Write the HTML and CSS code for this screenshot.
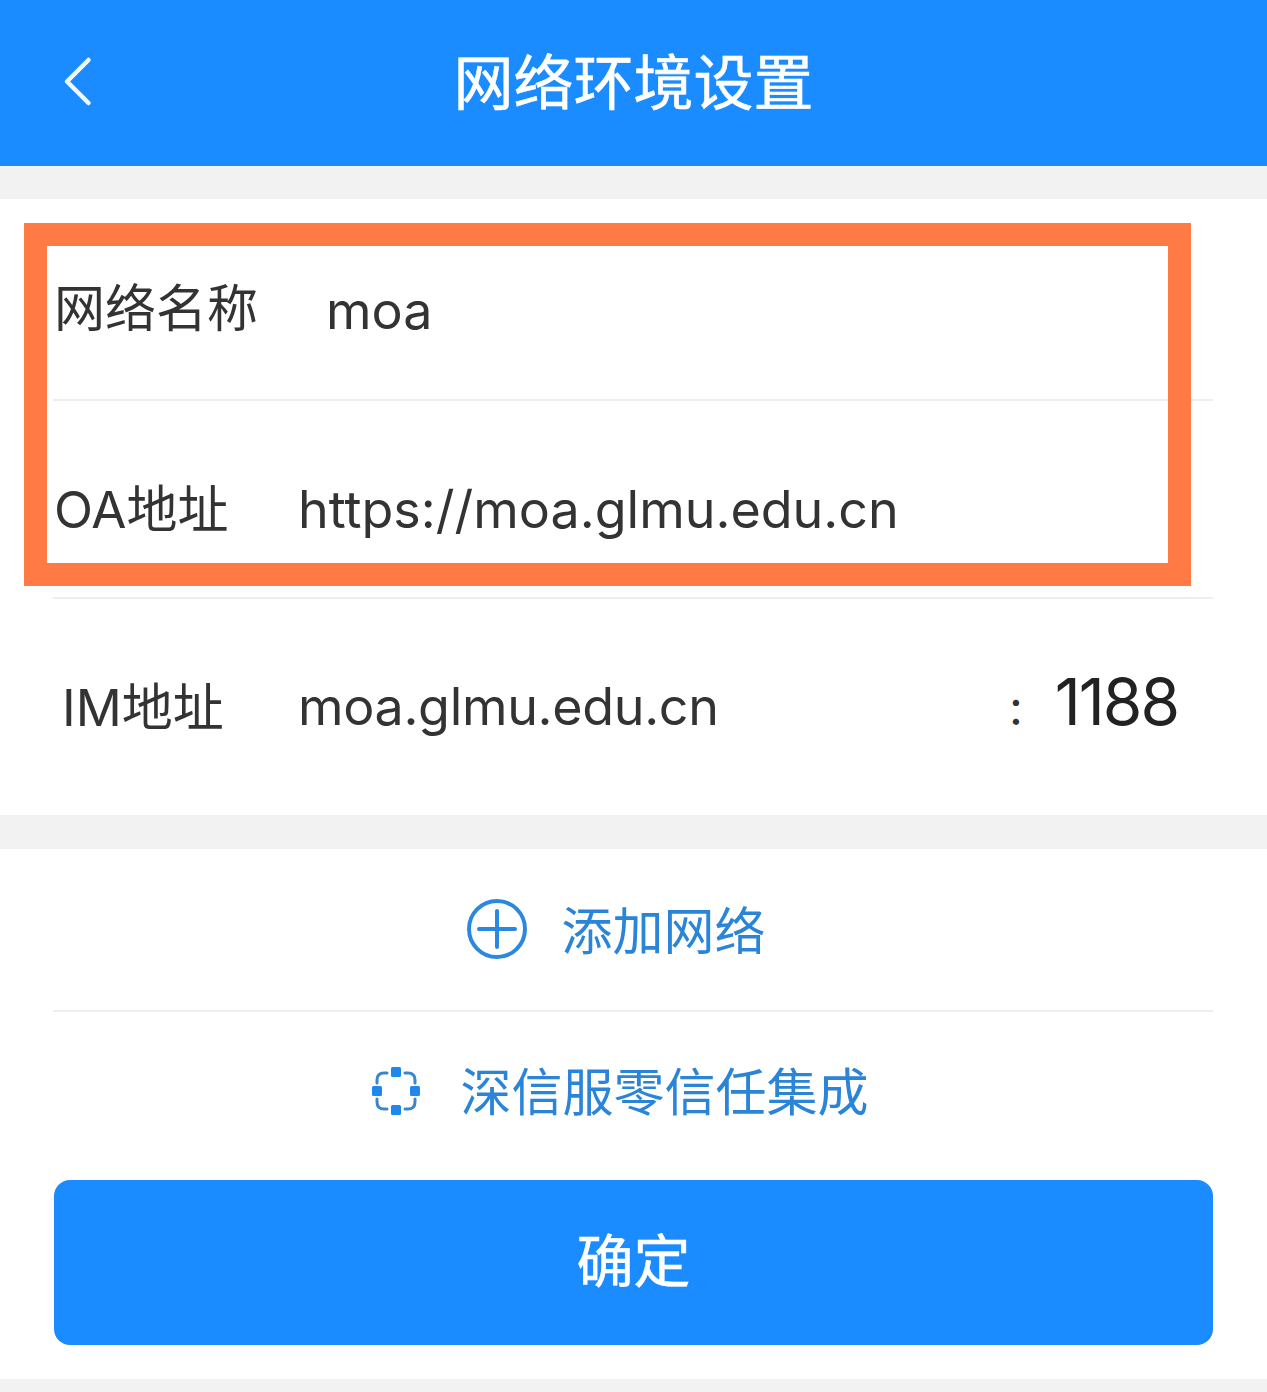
FILE: index.html
```html
<!DOCTYPE html>
<html lang="zh-CN">
<head>
    <meta charset="UTF-8">
    <meta name="viewport" content="width=device-width, initial-scale=1.0">
    <title>网络环境设置</title>
    <link rel="stylesheet" href="styles.css">
</head>
<body>
    <header class="topbar">
        <svg class="back" width="40" height="56" viewBox="0 0 40 56">
            <path d="M29.5 7 L8 28.5 L29.5 50" fill="none" stroke="#f2f8ff" stroke-width="4.5" stroke-linecap="round" stroke-linejoin="round"/>
        </svg>
        <h1 class="title">网络环境设置</h1>
    </header>

    <section class="form">
        <div class="row row-name">
            <span class="label">网络名称</span>
            <span class="value value-name">moa</span>
        </div>
        <div class="row row-oa">
            <span class="label">OA地址</span>
            <span class="value value-oa">https://moa.glmu.edu.cn</span>
        </div>
        <div class="row row-im">
            <span class="label label-im">IM地址</span>
            <span class="value value-im">moa.glmu.edu.cn</span>
            <span class="colon">:</span>
            <span class="port">1188</span>
        </div>
        <div class="highlight"></div>
    </section>

    <section class="actions">
        <div class="action action-add">
            <svg class="icon-add" width="60" height="60" viewBox="0 0 60 60">
                <circle cx="30" cy="30" r="28" fill="none" stroke="#2a88e0" stroke-width="4"/>
                <path d="M12 30 H48 M30 12 V48" fill="none" stroke="#2a88e0" stroke-width="4" stroke-linecap="round"/>
            </svg>
            <span class="action-text">添加网络</span>
        </div>
        <div class="action action-trust">
            <svg class="icon-trust" width="48" height="48" viewBox="0 0 48 48">
                <path d="M15 6 H12 Q5 6 5 13 V16 M33 6 H36 Q43 6 43 13 V16 M5 32 V35 Q5 42 12 42 H15 M43 32 V35 Q43 42 36 42 H33" fill="none" stroke="#3f86c9" stroke-width="3" stroke-linecap="round"/>
                <rect x="19" y="0" width="10" height="10" rx="1.5" fill="#1e88ee"/>
                <rect x="0" y="19" width="10" height="10" rx="1.5" fill="#1e88ee"/>
                <rect x="38" y="19" width="10" height="10" rx="1.5" fill="#1e88ee"/>
                <rect x="19" y="38" width="10" height="10" rx="1.5" fill="#1e88ee"/>
            </svg>
            <span>深信服零信任集成</span>
        </div>
        <button class="confirm">确定</button>
    </section>
</body>
</html>
```

FILE: styles.css
```css
body {
    margin: 0;
    background: #f2f2f2;
    font-family: Inter, "Noto Sans CJK SC", sans-serif;
    color: #333;
}
.topbar {
    height: 166px;
    box-sizing: border-box;
    padding-bottom: 10px;
    background: #1a8cff;
    display: flex;
    align-items: center;
    position: relative;
    justify-content: center;
}
.back {
    position: absolute;
    left: 59px;
    top: 53px;
}
.title {
    margin: 0;
    font-size: 60px;
    font-weight: 400;
    -webkit-text-stroke: 0.6px #fff;
    color: #fff;
}
.form {
    position: relative;
    margin-top: 33px;
    padding: 0 54px 0 53px;
    background: #fff;
}
.row {
    display: flex;
    align-items: center;
    font-size: 51px;
    box-sizing: border-box;
}
.row-name {
    height: 202px;
    padding-top: 12px;
    border-bottom: 2px solid #eee;
}
.row-oa {
    height: 198px;
    padding-top: 14px;
    border-bottom: 2px solid #eee;
}
.row-im {
    height: 216px;
    padding-bottom: 6px;
}
.label {
    width: 245px;
    flex: none;
    padding-left: 1px;
    box-sizing: border-box;
}
.label-im {
    padding-left: 9px;
}
.value {
    font-size: 52px;
}
.value-name {
    margin-left: 28px;
    padding-top: 10px;
}
.value-oa {
    padding-top: 6px;
}
.value-im {
    padding-top: 4px;
    letter-spacing: -0.33px;
}
.colon {
    margin-left: auto;
    font-size: 48px;
    padding-top: 6px;
}
.port {
    margin: 0 35px 0 32px;
    font-size: 64px;
    letter-spacing: -2px;
    position: relative;
    top: -3px;
    color: #222;
}
.highlight {
    position: absolute;
    left: 24px;
    top: 24px;
    width: 1167px;
    height: 363px;
    box-sizing: border-box;
    border: 23px solid #ff7a45;
}
.actions {
    margin-top: 34px;
    padding: 0 54px 34px 53px;
    background: #fff;
    margin-bottom: 13px;
}
.action {
    display: flex;
    align-items: center;
    justify-content: center;
    font-size: 51px;
    color: #2a85d8;
    box-sizing: border-box;
}
.action-add {
    height: 163px;
    border-bottom: 2px solid #eee;
    gap: 34px;
    padding-right: 33px;
    padding-bottom: 1px;
}
.action-text {
    padding-bottom: 2px;
}
.icon-trust {
    margin-top: 4px;
}
.action-trust {
    height: 168px;
    gap: 40px;
    padding-right: 25px;
    padding-bottom: 14px;
}
.confirm {
    display: block;
    width: 1159px;
    height: 165px;
    margin-left: 1px;
    padding: 0 0 12px;
    border: none;
    border-radius: 16px;
    background: #1a8cff;
    color: #fff;
    font-family: inherit;
    font-size: 57px;
    font-weight: 400;
    -webkit-text-stroke: 0.6px #fff;
}
```
